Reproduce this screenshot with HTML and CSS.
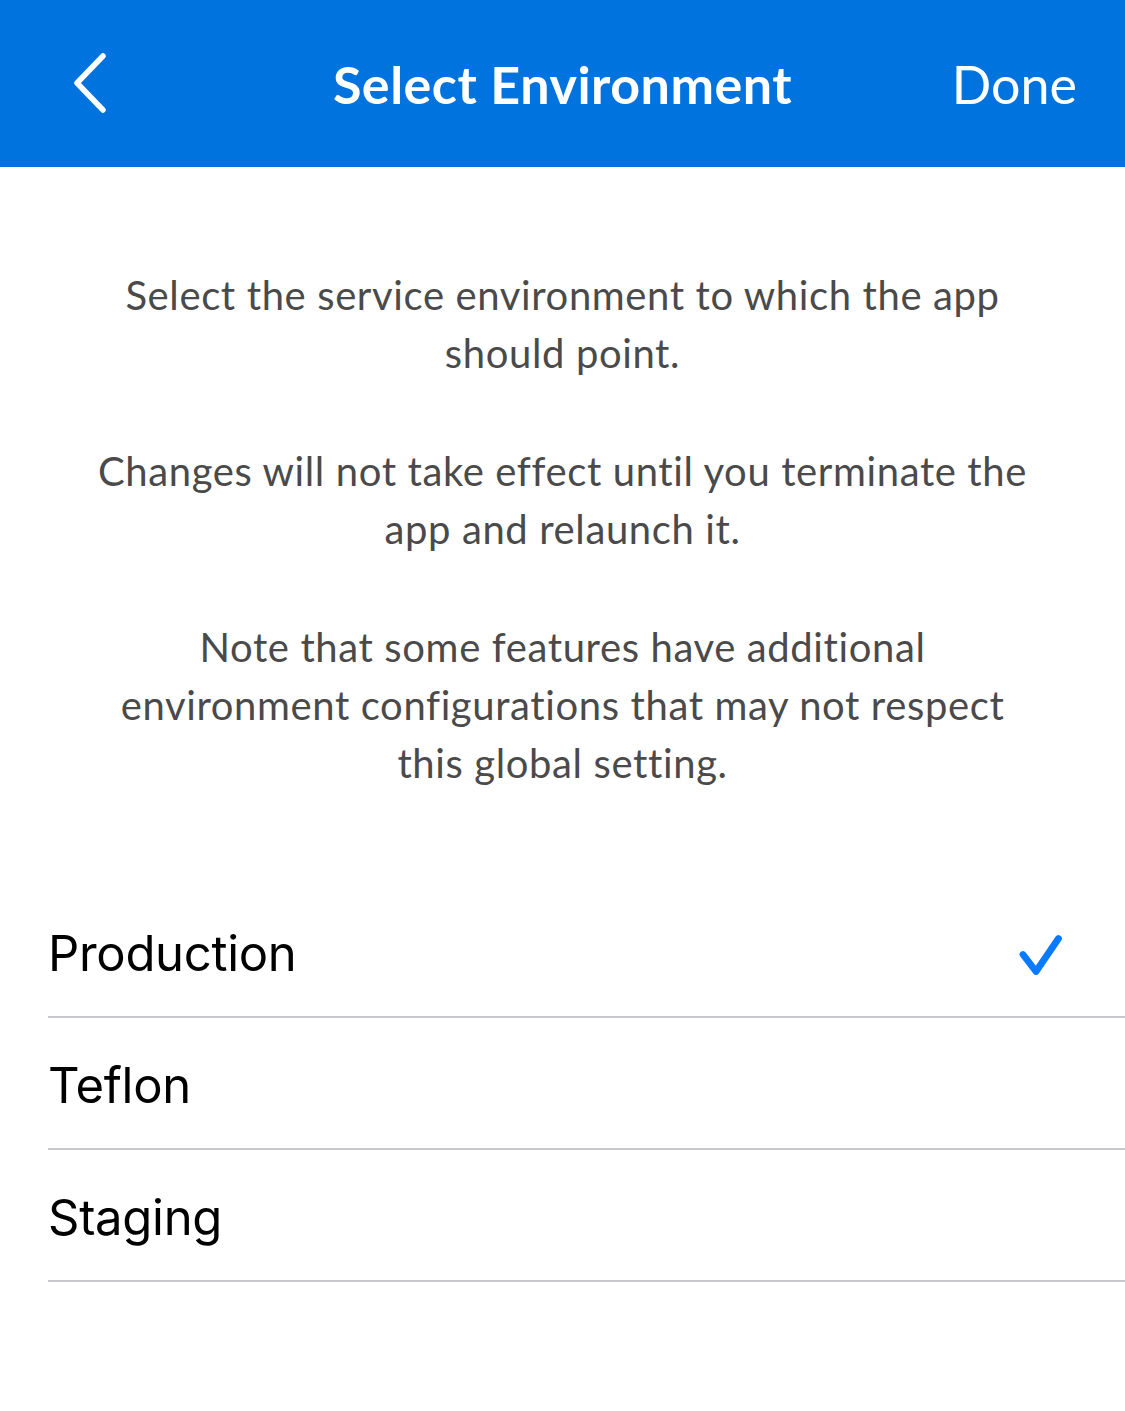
FILE: index.html
```html
<!DOCTYPE html>
<html lang="en">
<head>
<meta charset="utf-8">
<title>Select Environment</title>
<link rel="stylesheet" href="styles.css">
</head>
<body>
<header class="navbar">
  <button class="nav-back" aria-label="Back">
    <svg width="40" height="62" viewBox="0 0 40 62"><path d="M33 3 L7 30 L33 57" fill="none" stroke="#fff" stroke-width="5.5" stroke-linecap="round" stroke-linejoin="round"/></svg>
  </button>
  <h1 class="nav-title">Select Environment</h1>
  <button class="nav-done">Done</button>
</header>
<main class="content">
  <section class="intro">
    <p>Select the service environment to which the app<br>should point.</p>
    <p>Changes will not take effect until you terminate the<br>app and relaunch it.</p>
    <p>Note that some features have additional<br>environment configurations that may not respect<br>this global setting.</p>
  </section>
  <ul class="env-list">
    <li class="env-row"><span class="env-name">Production</span>
      <svg class="check" width="50" height="50" viewBox="0 0 50 50"><path d="M6 20.5 L19 37.5 L41.5 4.5" fill="none" stroke="#0a7aff" stroke-width="6.8" stroke-linecap="round" stroke-linejoin="round"/></svg>
    </li>
    <li class="env-row"><span class="env-name">Teflon</span></li>
    <li class="env-row"><span class="env-name">Staging</span></li>
  </ul>
</main>
</body>
</html>
```
FILE: styles.css
```css
* { box-sizing: border-box; }
html, body { margin: 0; padding: 0; background: #fff; }
body { width: 1125px; min-height: 1411px; font-family: Lato, "Open Sans", sans-serif; }

.navbar {
  height: 167px;
  background: #0073de;
  display: flex;
  align-items: center;
  justify-content: space-between;
  padding: 0 48px 0 70px;
  position: relative;
}
.nav-back {
  background: none; border: 0; padding: 0; margin: 0;
  width: 40px; height: 62px; display: flex;
}
.nav-title {
  position: absolute;
  left: 0; right: 0; top: 0; bottom: 0;
  margin: 0;
  display: flex; align-items: center; justify-content: center;
  color: #fff;
  font-family: Lato, sans-serif;
  font-weight: 700;
  font-size: 52px;
  letter-spacing: 0.5px;
  pointer-events: none;
}
.nav-done {
  background: none; border: 0; padding: 0; margin: 0;
  color: #fff;
  font-family: Lato, sans-serif;
  font-weight: 400;
  font-size: 52px;
  position: relative;
  z-index: 1;
}

.content { padding-top: 99px; }
.intro {
  text-align: center;
  color: #4a4a4a;
  font-family: Lato, sans-serif;
  font-size: 40px;
  line-height: 58px;
  letter-spacing: 0.62px;
  display: flex;
  flex-direction: column;
  gap: 60px;
}
.intro p { margin: 0; }

.env-list {
  list-style: none;
  margin: 94px 0 0 48px;
  padding: 0;
}
.env-row {
  height: 132px;
  border-bottom: 2px solid #c8c8cc;
  display: flex;
  align-items: center;
  justify-content: space-between;
  padding: 4px 58px 0 0;
}
.env-name {
  font-family: Inter, "Noto Sans", sans-serif;
  font-size: 49px;
  color: #000;
  letter-spacing: -0.3px;
}
.check { position: relative; top: 6px; }
```
